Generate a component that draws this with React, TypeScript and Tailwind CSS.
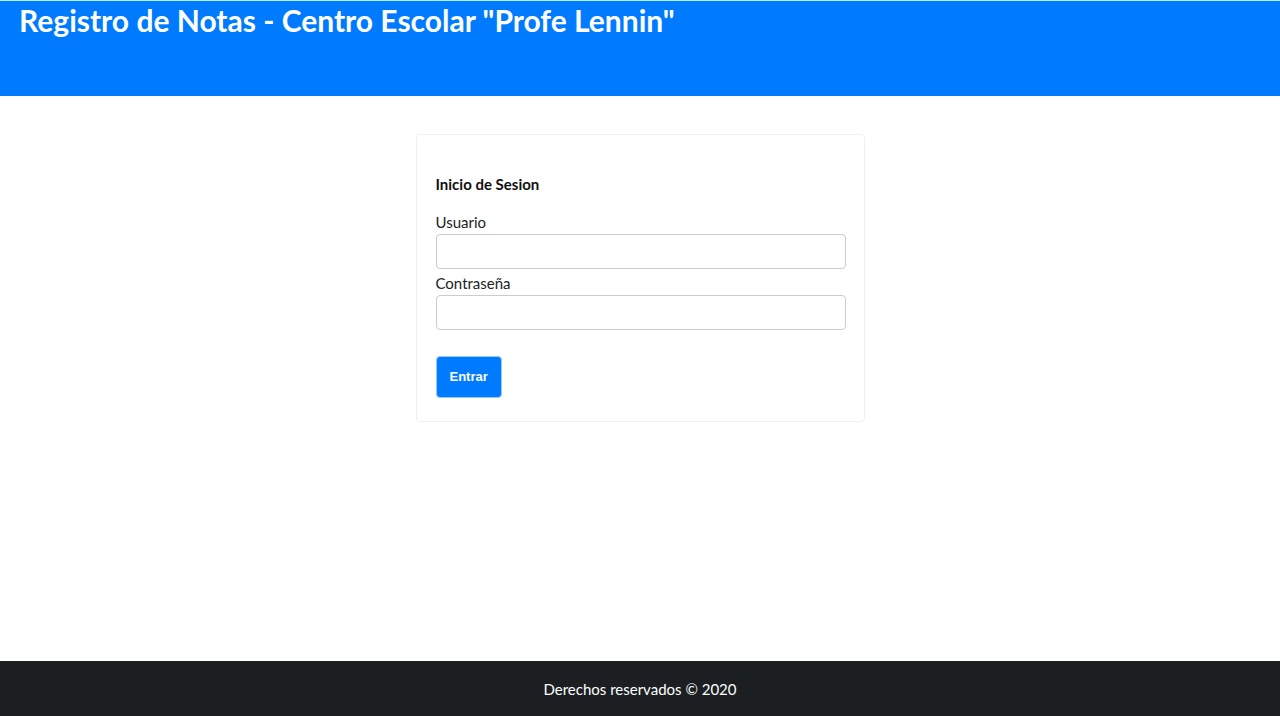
export default function App() {
  return (
    <div className="flex min-h-screen flex-col bg-white font-['Lato',sans-serif] text-[15px] text-black">
      <header className="h-24 border-t border-[#b5f0fa] bg-[#007bff] px-[19px]">
        <h1 className="text-[30px] leading-[38px] font-bold text-white">Registro de Notas - Centro Escolar "Profe Lennin"</h1>
      </header>
      <main className="flex-1 px-4 pt-[38px]">
        <form className="mx-auto w-full max-w-[449px] rounded border border-[#f0f0f0] pt-[39px] pr-[18px] pb-[23px] pl-[19px]" onSubmit={(e) => e.preventDefault()}>
          <h2 className="mb-4 leading-5 font-bold text-[#111111]">Inicio de Sesion</h2>
          <label htmlFor="usuario" className="block leading-6 text-[#222222]">Usuario</label>
          <input id="usuario" type="text" className="mb-0.5 block h-[35px] w-full rounded border border-[#cccccc] px-3 outline-none" />
          <label htmlFor="clave" className="block leading-6 text-[#222222]">Contraseña</label>
          <input id="clave" type="password" className="block h-[35px] w-full rounded border border-[#cccccc] px-3 outline-none" />
          <button type="submit" className="mt-[26px] block h-[42px] rounded border border-[#9cc8f5] bg-[#007bff] px-[13px] font-['Liberation_Sans',sans-serif] text-[13px] font-bold text-white">Entrar</button>
        </form>
      </main>
      <footer className="flex h-[55px] items-center justify-center bg-[#1b1f22] px-4 pt-0.5 text-white">
        <p>Derechos reservados © 2020</p>
      </footer>
    </div>
  );
}
